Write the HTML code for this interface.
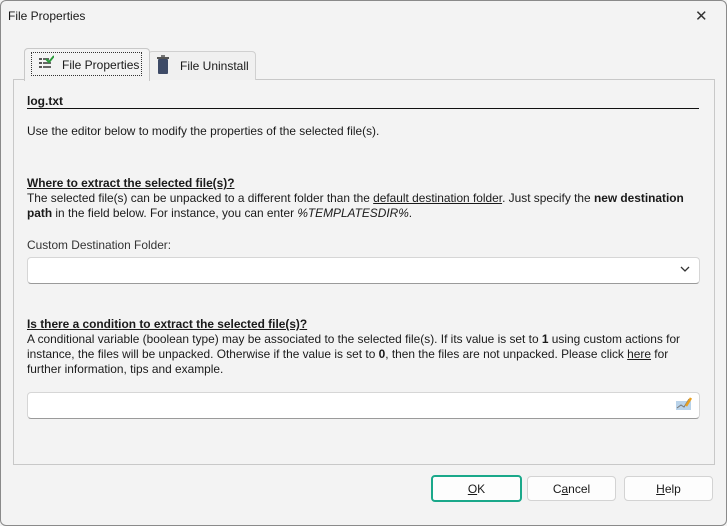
<!DOCTYPE html><html><head><style>
body{margin:0;width:727px;height:526px;background:#f3f3f3;font-family:"Liberation Sans",sans-serif;font-size:11.9px;color:#1a1a1a;position:relative;overflow:hidden}
.a{position:absolute;white-space:nowrap}
.win{position:absolute;left:0;top:0;width:725px;height:524px;border:1px solid #8a8a8a;border-radius:6px}
.panel{position:absolute;left:13px;top:79px;width:700px;height:384px;border:1px solid #c8c8c8;background:#f3f3f3}
.in{position:absolute;background:#fff;border:1px solid #d6d6d6;border-bottom-color:#9a9a9a;border-radius:4px}
.btn{position:absolute;top:476px;height:23px;width:87px;background:#fdfdfd;border:1px solid #d3d3d3;border-radius:4px;text-align:center;line-height:24px;font-size:12px}
u{text-decoration:underline}
</style></head><body>
<div class="win"></div>
<div class="a" style="left:8px;top:9px;font-size:12px">File Properties</div>
<div class="a" style="left:695px;top:7px;font-size:15px;font-weight:300;color:#333">✕</div>
<div class="panel"></div>
<div class="a" style="left:148px;top:51px;width:106px;height:28px;border:1px solid #d0d0d0;border-bottom:none;border-radius:4px 4px 0 0;background:#f0f0f0"></div>
<div class="a" style="left:24px;top:48px;width:124px;height:32px;border:1px solid #c8c8c8;border-bottom:none;border-radius:4px 4px 0 0;background:#f3f3f3"></div>
<div class="a" style="left:31px;top:52px;width:109px;height:22px;border:1px dotted #333"></div>
<svg class="a" style="left:38px;top:55px" width="16" height="17"><rect x="1" y="3" width="3" height="2" fill="#555"/><rect x="5" y="3" width="6" height="2" fill="#666"/><rect x="1" y="7" width="3" height="2" fill="#555"/><rect x="5" y="7" width="8" height="2" fill="#666"/><rect x="1" y="11" width="3" height="2" fill="#555"/><rect x="5" y="11" width="8" height="2" fill="#666"/><path d="M8 4l3 3 5-6" stroke="#2a9a3a" stroke-width="2" fill="none"/></svg>
<div class="a" style="left:62px;top:58px;font-size:12px">File Properties</div>
<svg class="a" style="left:156px;top:55px" width="14" height="20"><rect x="2" y="4" width="10" height="15" rx="1" fill="#3d4a66"/><rect x="1" y="2" width="12" height="2" fill="#555"/><rect x="5" y="0" width="4" height="2" fill="#777"/></svg>
<div class="a" style="left:180px;top:59px;font-size:12px">File Uninstall</div>
<div class="a" style="left:27px;top:94px;font-weight:bold;font-size:12px">log.txt</div>
<div class="a" style="left:27px;top:108px;width:672px;height:1px;background:#111"></div>
<div class="a" style="left:27px;top:124px">Use the editor below to modify the properties of the selected file(s).</div>
<div class="a" style="left:27px;top:176px;font-weight:bold"><u>Where to extract the selected file(s)?</u></div>
<div class="a" style="left:27px;top:191px">The selected file(s) can be unpacked to a different folder than the <u>default destination folder</u>. Just specify the <b>new destination</b></div>
<div class="a" style="left:27px;top:206px"><b>path</b> in the field below. For instance, you can enter <i>%TEMPLATESDIR%</i>.</div>
<div class="a" style="left:27px;top:238px;color:#333">Custom Destination Folder:</div>
<div class="in" style="left:27px;top:257px;width:671px;height:25px"></div>
<svg class="a" style="left:680px;top:265px" width="10" height="8"><path d="M1 2l4 4 4-4" stroke="#333" stroke-width="1.3" fill="none"/></svg>
<div class="a" style="left:27px;top:317px;font-weight:bold"><u>Is there a condition to extract the selected file(s)?</u></div>
<div class="a" style="left:27px;top:332px">A conditional variable (boolean type) may be associated to the selected file(s). If its value is set to <b>1</b> using custom actions for</div>
<div class="a" style="left:27px;top:347px">instance, the files will be unpacked. Otherwise if the value is set to <b>0</b>, then the files are not unpacked. Please click <u>here</u> for</div>
<div class="a" style="left:27px;top:362px">further information, tips and example.</div>
<div class="in" style="left:27px;top:392px;width:671px;height:25px"></div>
<svg class="a" style="left:675px;top:396px" width="18" height="17"><rect x="1" y="5" width="15" height="9" fill="#b9d3ea"/><path d="M2 12l4-3 3 2 5-8" stroke="#777" fill="none"/><path d="M11 10l5-8" stroke="#e8a020" stroke-width="2.5"/></svg>
<div class="btn" style="left:431px;border:2px solid #1aa88a;top:475px;height:23px">
<u>O</u>K</div>
<div class="btn" style="left:527px">C<u>a</u>ncel</div>
<div class="btn" style="left:624px"><u>H</u>elp</div>
</body></html>
